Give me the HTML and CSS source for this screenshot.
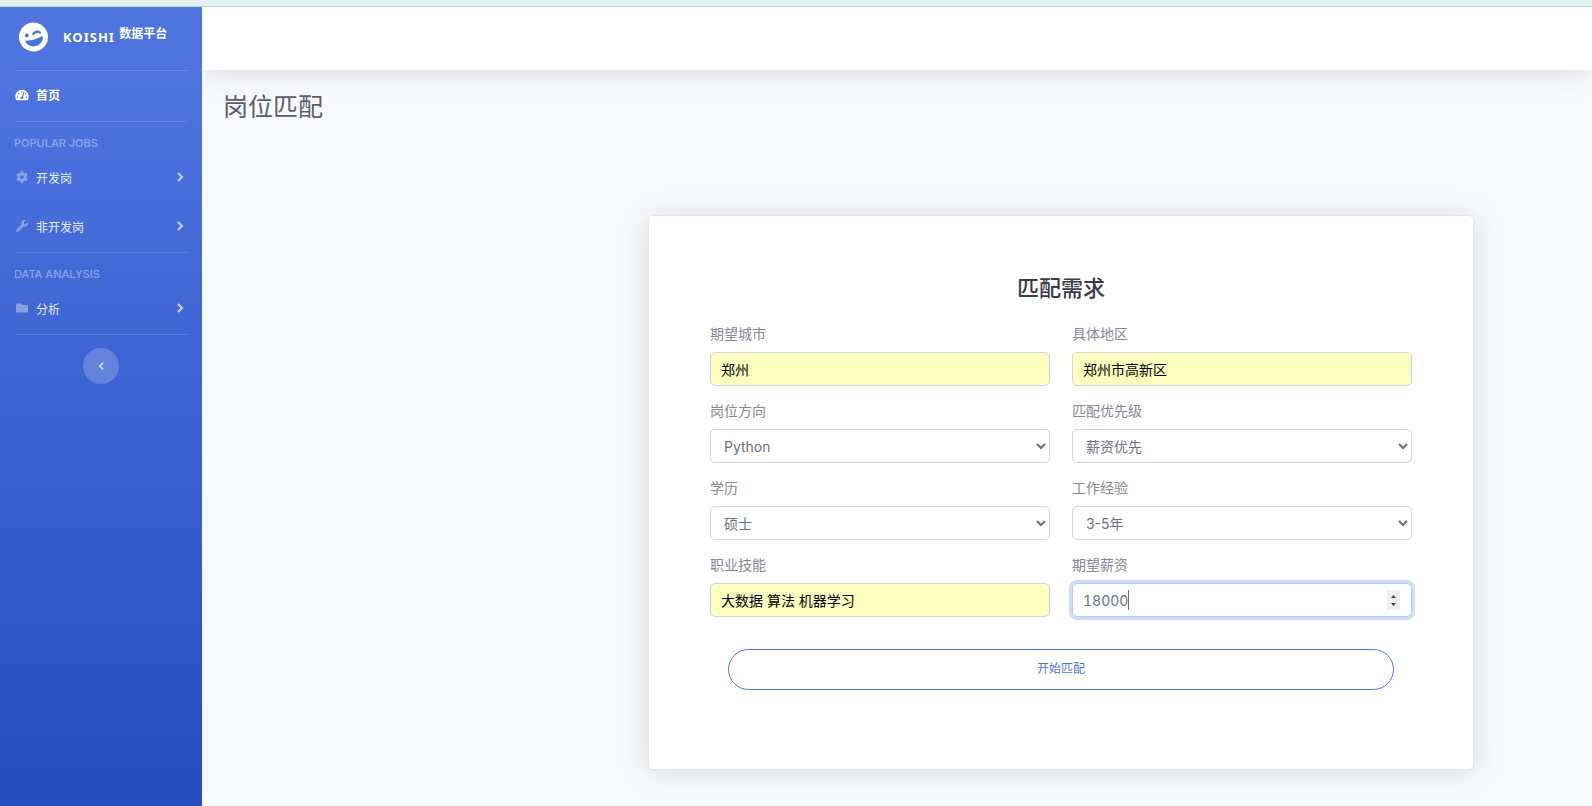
FILE: index.html
```html
<!DOCTYPE html>
<html lang="zh-CN">
<head>
<meta charset="utf-8">
<title>岗位匹配</title>
<link rel="stylesheet" href="styles.css">
</head>
<body>
<div class="top-strip"></div>
<div class="wrapper">
  <nav class="sidebar">
    <a class="brand" href="#">
      <svg class="brand-icon" viewBox="0 0 496 512" aria-hidden="true"><g transform="rotate(-15 248 256)"><circle cx="248" cy="256" r="248" fill="#fff"/><g fill="#4c72dd"><path d="M112 200c0-17 14-32 32-32s32 15 32 32-14 32-32 32-32-15-32-32z"/><path d="M269 226c-12 11-33 0-30-16 5-27 43-47 77-47s72 20 77 47c3 16-18 27-30 16l-10-9c-20-18-55-18-75 0z"/><path d="M96 301c-2-12 9-22 20-18 32 10 80 17 132 17s100-7 132-17c11-4 22 6 20 18-8 53-66 115-152 115S104 354 96 301z"/></g></g></svg>
      <span class="brand-text">KOISHI <sup>数据平台</sup></span>
    </a>
    <hr class="divider">
    <a class="nav-link active" href="#">
      <svg class="nav-icon" viewBox="0 0 576 512" aria-hidden="true"><path fill="currentColor" fill-rule="evenodd" d="M288 32C128.900 32 0 160.900 0 320c0 52.800 14.300 102.300 39 144.800 5.600 9.600 16.300 15.200 27.400 15.200h443.200c11.100 0 21.800-5.600 27.400-15.200C561.800 422.300 576 372.800 576 320c0-159.100-128.900-288-288-288zm0 64c14.700 0 26.600 10.100 30.300 23.700-1.100 2.300-2.600 4.200-3.500 6.700l-9.200 27.700c-5.100 3.500-11 6-17.600 6-17.700 0-32-14.300-32-32S270.300 96 288 96zM96 384c-17.700 0-32-14.300-32-32s14.300-32 32-32 32 14.300 32 32-14.300 32-32 32zm48-160c-17.700 0-32-14.300-32-32s14.300-32 32-32 32 14.300 32 32-14.300 32-32 32zm246.800-72.400-61.300 184C343.100 347.300 352 364.500 352 384c0 11.700-3.400 22.600-8.900 32H232.900c-5.500-9.400-8.900-20.300-8.900-32 0-34 26.500-61.400 60-63.500l61.300-184c4.200-12.600 17.700-19.500 30.400-15.200 12.600 4.200 19.400 17.800 15.100 30.300zm14.700 57.200 15.500-46.600c3.500-1.300 7.100-2.200 11-2.200 17.700 0 32 14.300 32 32s-14.300 32-32 32c-11.400 0-20.900-6.300-26.500-15.200zM480 384c-17.700 0-32-14.300-32-32s14.300-32 32-32 32 14.300 32 32-14.300 32-32 32z"/></svg>
      <span>首页</span>
    </a>
    <hr class="divider">
    <div class="heading">POPULAR JOBS</div>
    <a class="nav-link" href="#">
      <svg class="nav-icon dim" viewBox="0 0 512 512" aria-hidden="true"><path fill="currentColor" d="M487.400 315.700l-42.600-24.600c4.300-23.200 4.300-47 0-70.200l42.600-24.600c4.900-2.800 7.100-8.600 5.500-14-11.100-35.600-30-67.800-54.700-94.600-3.800-4.100-10-5.100-14.800-2.300L380.800 110c-17.900-15.400-38.500-27.300-60.800-35.100V25.800c0-5.600-3.900-10.500-9.400-11.700-36.700-8.200-74.300-7.800-109.200 0-5.500 1.200-9.400 6.100-9.400 11.700V75c-22.200 7.900-42.800 19.800-60.800 35.100L88.700 85.500c-4.900-2.800-11-1.900-14.800 2.300-24.700 26.700-43.600 58.900-54.700 94.600-1.700 5.400.6 11.200 5.500 14L67.300 221c-4.300 23.200-4.300 47 0 70.200l-42.600 24.600c-4.900 2.800-7.100 8.600-5.500 14 11.100 35.600 30 67.800 54.700 94.600 3.800 4.100 10 5.100 14.800 2.300l42.600-24.600c17.900 15.400 38.500 27.300 60.800 35.100v49.200c0 5.600 3.900 10.500 9.400 11.700 36.700 8.200 74.300 7.800 109.200 0 5.500-1.200 9.400-6.100 9.400-11.700v-49.200c22.200-7.900 42.800-19.800 60.800-35.100l42.600 24.600c4.900 2.800 11 1.900 14.800-2.300 24.700-26.700 43.600-58.900 54.700-94.600 1.500-5.500-.7-11.300-5.600-14.100zM256 336c-44.100 0-80-35.900-80-80s35.900-80 80-80 80 35.900 80 80-35.900 80-80 80z"/></svg>
      <span>开发岗</span>
      <svg class="chevron" viewBox="0 0 8 12" aria-hidden="true"><path d="M2 2l4 4-4 4"/></svg>
    </a>
    <a class="nav-link" href="#">
      <svg class="nav-icon dim" viewBox="0 0 512 512" aria-hidden="true"><path fill="currentColor" fill-rule="evenodd" d="M507.700 109.100c-2.200-9-13.500-12.100-20.100-5.500l-74.400 74.400-67.900-11.300L334 98.900l74.400-74.400c6.600-6.600 3.400-17.900-5.700-20.200-47.400-11.700-99.600.9-136.600 37.900-39.600 39.600-50.500 97.100-34.100 147.200L18.700 402.800c-25 25-25 65.500 0 90.500s65.500 25 90.500 0l213.200-213.200c50.100 16.700 107.500 5.700 147.400-34.200 37.100-37.100 49.700-89.300 37.900-136.800zM64 472c-13.300 0-24-10.700-24-24s10.700-24 24-24 24 10.700 24 24-10.700 24-24 24z"/></svg>
      <span>非开发岗</span>
      <svg class="chevron" viewBox="0 0 8 12" aria-hidden="true"><path d="M2 2l4 4-4 4"/></svg>
    </a>
    <hr class="divider">
    <div class="heading">DATA ANALYSIS</div>
    <a class="nav-link" href="#">
      <svg class="nav-icon dim" viewBox="0 0 512 512" aria-hidden="true"><path fill="currentColor" d="M464 128H272l-64-64H48C21.500 64 0 85.500 0 112v288c0 26.500 21.500 48 48 48h416c26.500 0 48-21.500 48-48V176c0-26.500-21.500-48-48-48z"/></svg>
      <span>分析</span>
      <svg class="chevron" viewBox="0 0 8 12" aria-hidden="true"><path d="M2 2l4 4-4 4"/></svg>
    </a>
    <hr class="divider">
    <button class="collapse" type="button" aria-label="收起侧栏"><svg viewBox="0 0 8 12" aria-hidden="true"><path d="M6 2L2 6l4 4"/></svg></button>
  </nav>
  <div class="content">
    <header class="topbar"></header>
    <main class="main">
      <h1 class="page-title">岗位匹配</h1>
      <div class="card-row">
        <form class="card">
          <h2 class="card-title">匹配需求</h2>
          <div class="fields">
            <div class="field"><label for="city">期望城市</label><input class="control filled" id="city" type="text" value="郑州"></div>
            <div class="field"><label for="area">具体地区</label><input class="control filled" id="area" type="text" value="郑州市高新区"></div>
            <div class="field"><label for="job">岗位方向</label><select class="control" id="job"><option>Python</option></select></div>
            <div class="field"><label for="priority">匹配优先级</label><select class="control" id="priority"><option>薪资优先</option></select></div>
            <div class="field"><label for="degree">学历</label><select class="control" id="degree"><option>硕士</option></select></div>
            <div class="field"><label for="exp">工作经验</label><select class="control" id="exp"><option>3-5年</option></select></div>
            <div class="field"><label for="skill">职业技能</label><input class="control filled" id="skill" type="text" value="大数据 算法 机器学习"></div>
            <div class="field"><label for="salary">期望薪资</label><input class="control" id="salary" type="number" value="18000" autofocus></div>
          </div>
          <button class="submit" type="button">开始匹配</button>
        </form>
      </div>
    </main>
  </div>
</div>
</body>
</html>
```
FILE: styles.css
```css
* { box-sizing: border-box; }

body {
  margin: 0;
  min-height: 100vh;
  display: flex;
  flex-direction: column;
  background: #f8f9fc;
  color: #858796;
  font-family: Inter, "Noto Sans CJK SC", sans-serif;
  font-size: 14px;
}

.top-strip {
  position: relative;
  z-index: 1;
  height: 7px;
  background: #e2f2f1;
  border-bottom: 1px solid #b4d8d5;
}

.wrapper { flex: 1; display: flex; }

.sidebar {
  position: relative;
  z-index: 1;
  flex: 0 0 202px;
  display: flex;
  flex-direction: column;
  background: linear-gradient(180deg, #4e73df 10%, #224abe 108%);
}

.sidebar a { text-decoration: none; }

.brand {
  height: 63px;
  display: flex;
  align-items: center;
  gap: 15px;
  padding: 0 19px 3px;
  color: #fff;
}

.brand-icon { width: 29px; height: 30px; }

.brand-text {
  font-family: "Noto Sans", "Noto Sans CJK SC", sans-serif;
  font-size: 13px;
  font-weight: 700;
  letter-spacing: 1px;
}

.brand-text sup {
  font-size: 12px;
  line-height: 0;
  vertical-align: 4px;
  letter-spacing: 0;
}

.divider {
  width: auto;
  height: 1px;
  margin: 0 15px;
  border: 0;
  background: rgba(255, 255, 255, 0.16);
}

.nav-link {
  height: 49px;
  display: flex;
  align-items: center;
  padding: 0 18px 3px 15px;
  color: rgba(255, 255, 255, 0.9);
  font-size: 12px;
}

.nav-link.active { height: 50px; color: #fff; font-weight: 700; }

.nav-icon { width: 14px; height: 12px; margin-right: 7px; }
.nav-icon.dim { opacity: 0.4; }

.chevron { width: 8px; height: 12px; margin-left: auto; }
.chevron path,
.collapse path { fill: none; stroke: rgba(255, 255, 255, 0.7); stroke-width: 2; }

.heading {
  padding: 13px 14px 3px;
  color: rgba(255, 255, 255, 0.4);
  font-size: 11px;
  font-weight: 500;
  line-height: 16px;
}

.collapse {
  align-self: center;
  width: 36px;
  height: 36px;
  display: grid;
  place-items: center;
  margin-top: 13px;
  padding: 0;
  border: 0;
  border-radius: 50%;
  background: rgba(255, 255, 255, 0.2);
}

.collapse svg { width: 7px; height: 10px; }

.content { flex: 1; min-width: 0; }

.topbar {
  height: 63px;
  background: #fff;
  box-shadow: 0 2px 28px rgba(58, 59, 69, 0.15);
}

.main { padding: 22px 21px 21px; }

.page-title {
  margin: 0;
  color: #5a5c69;
  font-size: 25px;
  font-weight: 400;
  line-height: 30px;
}

.card-row {
  display: grid;
  grid-template-columns: 425fr 826fr 97fr;
  margin-top: 93px;
}

.card {
  grid-column: 2;
  padding: 57px 61px 79px;
  border: 1px solid #e3e6f0;
  border-radius: 5px;
  background: #fff;
  box-shadow: 0 2px 28px rgba(58, 59, 69, 0.15);
}

.card-title {
  margin: 0 0 20px;
  color: #3a3b45;
  font-size: 22px;
  font-weight: 500;
  line-height: 30px;
  text-align: center;
}

.fields {
  display: grid;
  grid-template-columns: 1fr 1fr;
  gap: 14px 22px;
}

.field { display: flex; flex-direction: column; gap: 7px; }
.field label { line-height: 22px; }

.control {
  width: 100%;
  height: 34px;
  padding: 0 10px;
  border: 1px solid #d1d3e2;
  border-radius: 5px;
  background: #fff;
  color: #6e707e;
  font: inherit;
}

.control.filled { background: #faffbd; color: #000; }
select.control { padding: 0 0 0 9px; }

.control:focus {
  outline: 0;
  border-color: #bac8f3;
  box-shadow: 0 0 0 3px rgba(78, 115, 223, 0.25);
}

.control::-webkit-inner-spin-button {
  appearance: none;
  width: 13px;
  height: 20px;
  margin-right: 1px;
  opacity: 1;
  background: #efefef url("data:image/svg+xml,%3Csvg xmlns='http://www.w3.org/2000/svg' viewBox='0 0 13 20'%3E%3Cpath d='M4 8l2.500-3L9 8zM4 13l2.500 3L9 13z' fill='%23444'/%3E%3C/svg%3E") center / 13px 20px no-repeat;
}

#salary { font-variant-numeric: tabular-nums; }

/* steady insertion mark after the amount */
#salary:focus {
  caret-color: transparent;
  background: linear-gradient(#6e707e, #6e707e) 55px center / 1px 20px no-repeat #fff;
}

.submit {
  display: block;
  width: calc(100% - 36px);
  height: 41px;
  margin: 32px auto 0;
  padding: 0 0 4px;
  border: 1px solid #4e73df;
  border-radius: 21px;
  background: #fff;
  color: #4e73df;
  font-family: inherit;
  font-size: 12px;
}
```
